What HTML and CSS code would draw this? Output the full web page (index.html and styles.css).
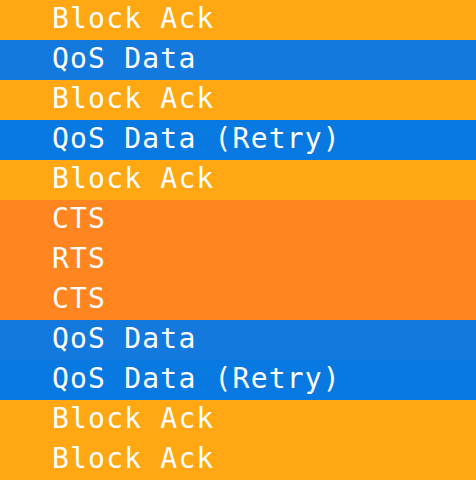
FILE: index.html
```html
<!DOCTYPE html>
<html>
<head>
<meta charset="utf-8">
<link rel="stylesheet" href="styles.css">
</head>
<body>
<div class="list">
  <div class="row ack">Block Ack</div>
  <div class="row data">QoS Data</div>
  <div class="row ack">Block Ack</div>
  <div class="row retry">QoS Data (Retry)</div>
  <div class="row ack">Block Ack</div>
  <div class="row ctl">CTS</div>
  <div class="row ctl">RTS</div>
  <div class="row ctl">CTS</div>
  <div class="row data">QoS Data</div>
  <div class="row retry">QoS Data (Retry)</div>
  <div class="row ack">Block Ack</div>
  <div class="row ack">Block Ack</div>
</div>
</body>
</html>
```
FILE: styles.css
```css
html, body {
  margin: 0;
  padding: 0;
  background: #ffffff;
}
.list {
  display: flex;
  flex-direction: column;
  width: 476px;
}
.row {
  box-sizing: border-box;
  height: 40px;
  line-height: 37px;
  padding: 0 0 3px 52px;
  font-family: "DejaVu Sans Mono", monospace;
  font-size: 28px;
  letter-spacing: 1.2px;
  color: #ffffff;
  white-space: pre;
}
.ack { background: #ffa814; }
.data { background: #1479dc; }
.retry { background: #0879e0; }
.ctl { background: #ff8520; }
```
